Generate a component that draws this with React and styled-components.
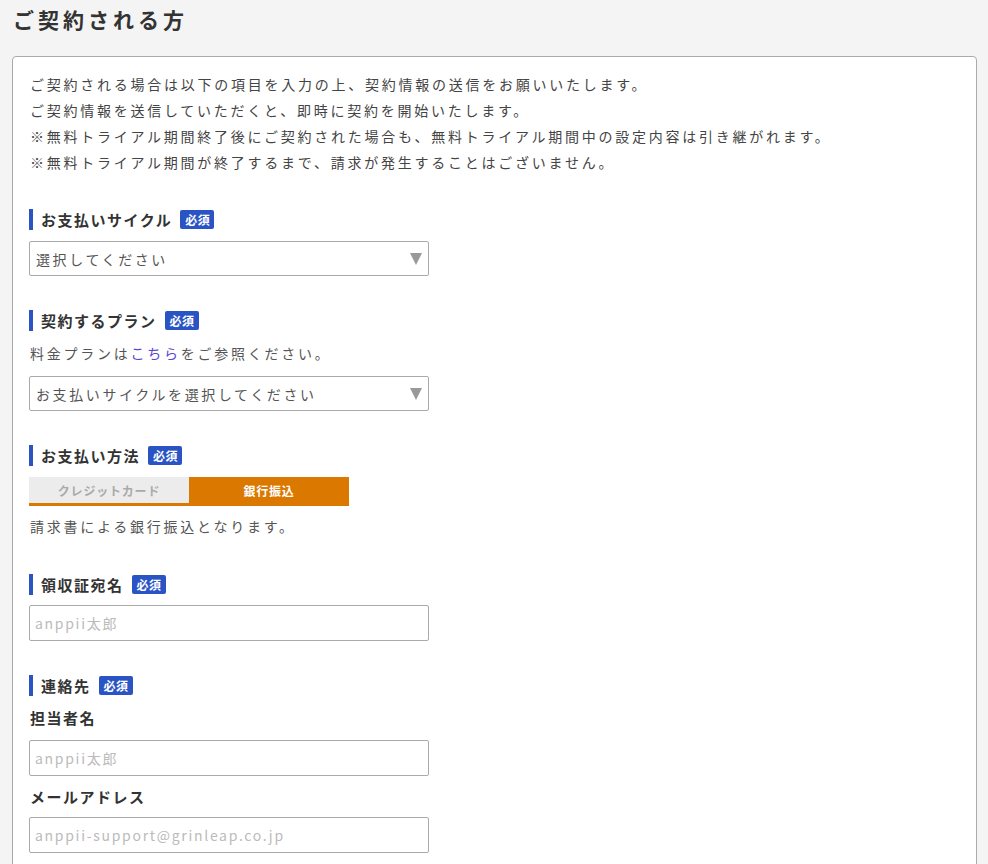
import React from 'react';
import styled, { createGlobalStyle } from 'styled-components';

const GlobalStyle = createGlobalStyle`
  body {
    margin: 0;
    background: #f4f4f4;
    font-family: "Noto Sans CJK JP", "Noto Sans", sans-serif;
    color: #333;
  }
`;

const Page = styled.div`
  padding: 0 11px 0 12px;
`;

const Title = styled.h1`
  margin: 0;
  padding: 4px 0 0 1px;
  height: 56px;
  box-sizing: border-box;
  font-size: 21px;
  font-weight: 700;
  letter-spacing: 4px;
  line-height: 30px;
  color: #333;
`;

const Card = styled.div`
  background: #fff;
  border: 1px solid #aaa;
  border-radius: 4px;
  padding: 14px 16px 40px;
  min-height: 820px;
`;

const Intro = styled.p`
  margin: 0 0 34px;
  padding-left: 1px;
  font-size: 14px;
  line-height: 26px;
  letter-spacing: 2.75px;
  color: #444;
`;

const Section = styled.section`
  margin-bottom: ${p => p.$mb ?? 34}px;
`;

const Heading = styled.div`
  display: flex;
  align-items: center;
  gap: 8px;
  height: 21px;
  border-left: 4px solid #2a54c4;
  padding-left: 8px;
  margin-bottom: ${p => p.$mb ?? 11}px;
`;

const HeadingText = styled.span`
  font-size: 15px;
  font-weight: 700;
  letter-spacing: 1.5px;
  color: #333;
`;

const Badge = styled.span`
  background: #2a54c4;
  color: #fff;
  font-size: 12px;
  font-weight: 700;
  letter-spacing: 0.5px;
  line-height: 19px;
  padding: 0 4px 0 5px;
  border-radius: 2px;
`;

const SubLabel = styled.div`
  font-size: 15px;
  font-weight: 700;
  letter-spacing: 1.5px;
  line-height: 20px;
  color: #333;
  padding-left: 1px;
  margin: ${p => p.$mt ?? 0}px 0 ${p => p.$mb ?? 12}px;
`;

const Note = styled.p`
  margin: 0 0 ${p => p.$mb ?? 0}px;
  padding-left: 1px;
  font-size: 14px;
  line-height: 22px;
  letter-spacing: 2.75px;
  color: #555;
  a {
    color: #5a46d4;
    text-decoration: none;
  }
`;

const SelectBox = styled.div`
  position: relative;
  width: 400px;
  height: 35px;
  box-sizing: border-box;
  border: 1px solid #aaa;
  border-radius: 2px;
  display: flex;
  align-items: center;
  padding: 0 6px;
  font-size: 14px;
  letter-spacing: 2.6px;
  color: #555;
  &::after {
    content: "";
    position: absolute;
    right: 6px;
    top: 11px;
    border-left: 6px solid transparent;
    border-right: 6px solid transparent;
    border-top: 12px solid #999;
  }
`;

const Input = styled.input`
  display: block;
  width: 400px;
  height: 36px;
  box-sizing: border-box;
  border: 1px solid #aaa;
  border-radius: 2px;
  padding: 0 5px;
  font-family: "Noto Sans CJK JP", "Noto Sans", sans-serif;
  font-size: 14px;
  letter-spacing: 1.7px;
  color: #333;
  &::placeholder {
    color: #bbb;
  }
`;

const Tabs = styled.div`
  display: flex;
  width: 320px;
  border-bottom: 3px solid #db7800;
  margin-bottom: 9px;
`;

const Tab = styled.div`
  flex: 1;
  height: 26px;
  display: flex;
  align-items: center;
  justify-content: center;
  font-size: 12px;
  font-weight: 700;
  letter-spacing: 0.8px;
  background: ${p => (p.$active ? '#db7800' : '#ececec')};
  color: ${p => (p.$active ? '#fff' : '#aaa')};
`;

const Required = () => <Badge>必須</Badge>;

export default function App() {
  return (
    <>
      <GlobalStyle />
      <Page>
        <Title>ご契約される方</Title>
        <Card>
          <Intro>
            ご契約される場合は以下の項目を入力の上、契約情報の送信をお願いいたします。<br />
            ご契約情報を送信していただくと、即時に契約を開始いたします。<br />
            ※無料トライアル期間終了後にご契約された場合も、無料トライアル期間中の設定内容は引き継がれます。<br />
            ※無料トライアル期間が終了するまで、請求が発生することはございません。
          </Intro>

          <Section>
            <Heading>
              <HeadingText>お支払いサイクル</HeadingText>
              <Required />
            </Heading>
            <SelectBox>選択してください</SelectBox>
          </Section>

          <Section>
            <Heading>
              <HeadingText>契約するプラン</HeadingText>
              <Required />
            </Heading>
            <Note $mb={12}>
              料金プランは<a href="#plan">こちら</a>をご参照ください。
            </Note>
            <SelectBox>お支払いサイクルを選択してください</SelectBox>
          </Section>

          <Section $mb={37}>
            <Heading>
              <HeadingText>お支払い方法</HeadingText>
              <Required />
            </Heading>
            <Tabs>
              <Tab>クレジットカード</Tab>
              <Tab $active>銀行振込</Tab>
            </Tabs>
            <Note>請求書による銀行振込となります。</Note>
          </Section>

          <Section>
            <Heading $mb={10}>
              <HeadingText>領収証宛名</HeadingText>
              <Required />
            </Heading>
            <Input placeholder="anppii太郎" />
          </Section>

          <Section>
            <Heading $mb={12}>
              <HeadingText>連絡先</HeadingText>
              <Required />
            </Heading>
            <SubLabel>担当者名</SubLabel>
            <Input placeholder="anppii太郎" />
            <SubLabel $mt={11} $mb={10}>メールアドレス</SubLabel>
            <Input placeholder="anppii-support@grinleap.co.jp" />
          </Section>
        </Card>
      </Page>
    </>
  );
}
